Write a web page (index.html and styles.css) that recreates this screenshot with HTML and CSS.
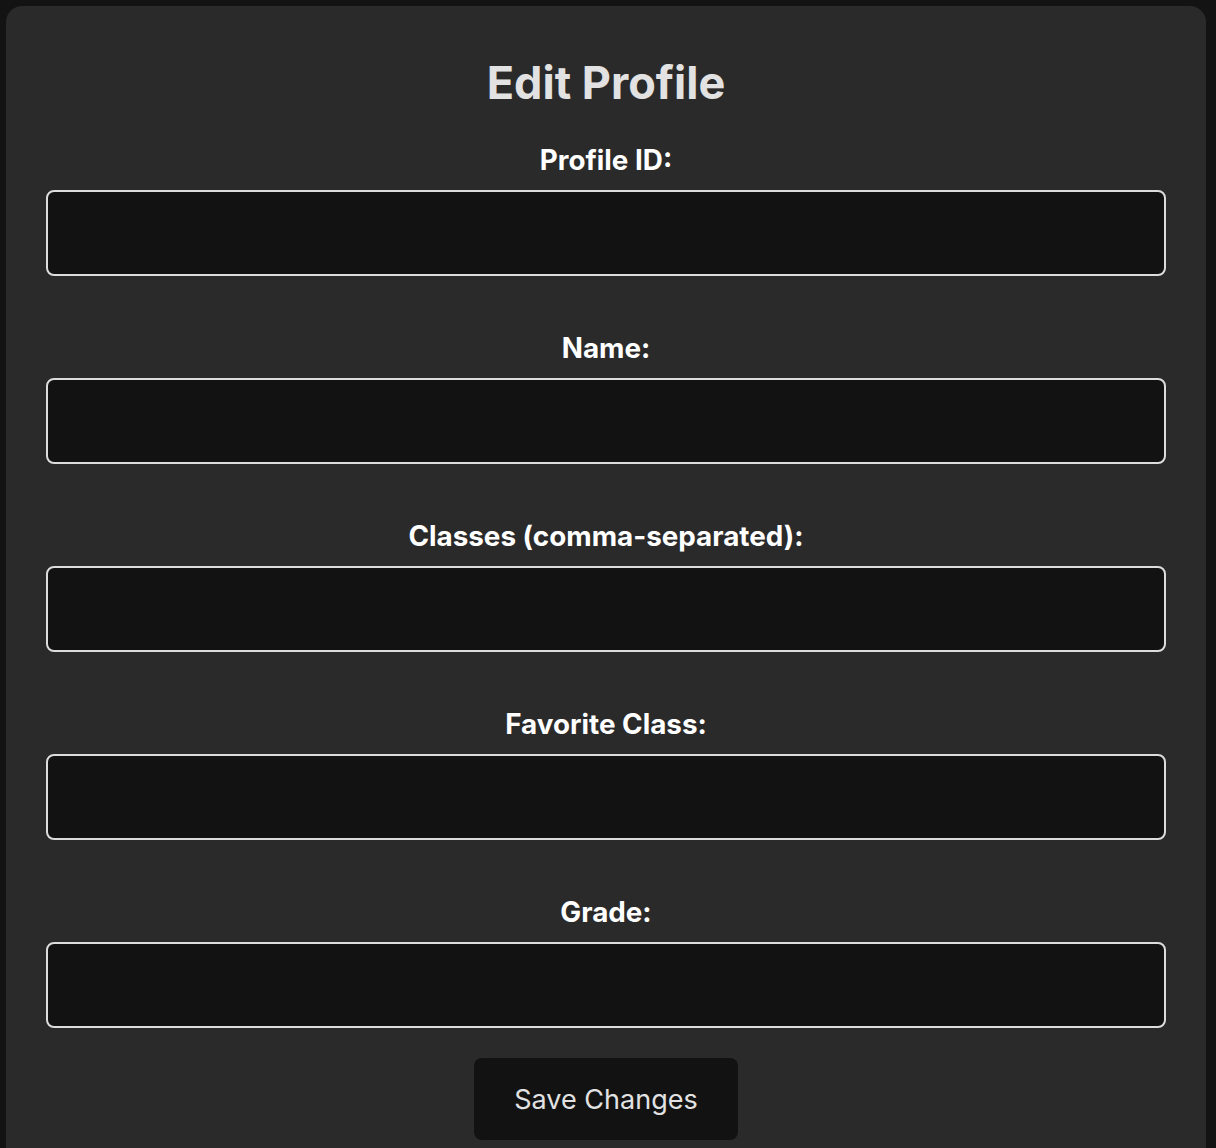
FILE: index.html
```html
<!DOCTYPE html>
<html lang="en">
<head>
<meta charset="utf-8">
<title>Edit Profile</title>
<link rel="stylesheet" href="styles.css">
</head>
<body>
<main class="card">
  <h1 class="title">Edit Profile</h1>
  <form class="form">
    <div class="field">
      <label class="label" for="pid">Profile ID:</label>
      <input class="input" id="pid" type="text">
    </div>
    <div class="field">
      <label class="label" for="name">Name:</label>
      <input class="input" id="name" type="text">
    </div>
    <div class="field">
      <label class="label" for="classes">Classes (comma-separated):</label>
      <input class="input" id="classes" type="text">
    </div>
    <div class="field">
      <label class="label" for="fav">Favorite Class:</label>
      <input class="input" id="fav" type="text">
    </div>
    <div class="field">
      <label class="label" for="grade">Grade:</label>
      <input class="input" id="grade" type="text">
    </div>
    <button class="save" type="button">Save Changes</button>
  </form>
</main>
</body>
</html>
```

FILE: styles.css
```css
html, body {
  background: #131313;
}
body {
  margin: 6px 10px 0 6px;
  font-family: Inter, "Noto Sans", "Liberation Sans", sans-serif;
  color: #fff;
}
.card {
  background: #2a2a2a;
  border-radius: 16px;
  padding: 48px 40px 40px;
  min-height: 1200px;
  box-sizing: border-box;
}
.title {
  margin: 0;
  text-align: center;
  font-size: 45px;
  line-height: 58px;
  font-weight: 700;
  color: #e2e2e2;
}
.form {
  display: flex;
  flex-direction: column;
  margin-top: 32px;
}
.field {
  display: flex;
  flex-direction: column;
  margin-bottom: 56px;
}
.field:last-of-type {
  margin-bottom: 30px;
}
.label {
  text-align: center;
  font-size: 27.8px;
  line-height: 32px;
  font-weight: 700;
  color: #fff;
  margin-bottom: 14px;
}
.input {
  height: 86px;
  box-sizing: border-box;
  background: #121212;
  border: 2px solid #dcdcdc;
  border-radius: 8px;
  color: #fff;
  font-size: 24px;
  padding: 0 16px;
  outline: none;
}
.save {
  align-self: center;
  width: 264px;
  height: 82px;
  background: #121212;
  color: #e2e2e2;
  border: none;
  border-radius: 8px;
  font-family: inherit;
  font-size: 27px;
  font-weight: 400;
}
```
